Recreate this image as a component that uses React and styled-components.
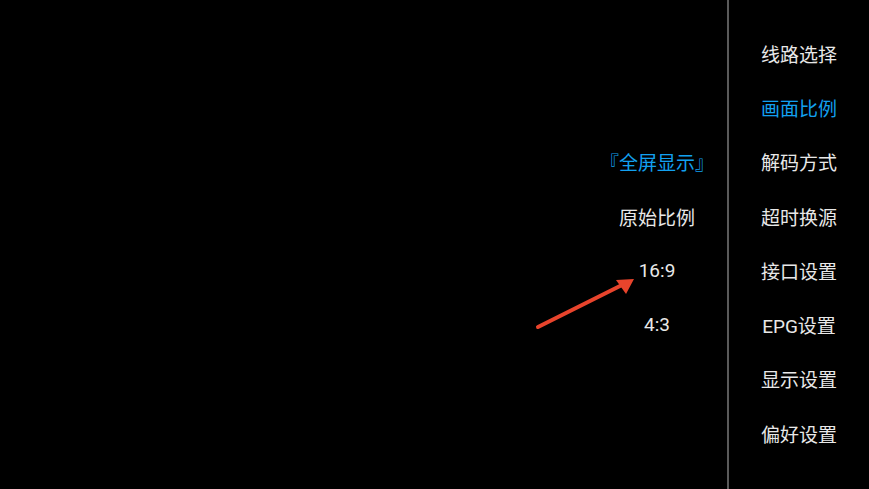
import styled, { createGlobalStyle } from "styled-components";

const GlobalStyle = createGlobalStyle`
  html, body {
    margin: 0;
    padding: 0;
    background: #000;
  }
  body {
    font-family: Roboto, "Noto Sans CJK SC", sans-serif;
  }
`;

const ROW = 54.3;
const TOP = 26;

const Screen = styled.div`
  position: relative;
  width: 869px;
  height: 489px;
  background: #000;
  display: flex;
  overflow: hidden;
`;

const Stage = styled.div`
  flex: 1;
`;

const Column = styled.ul`
  list-style: none;
  margin: 0;
  padding: ${({ $offset }) => TOP + $offset * ROW}px 0 0;
  width: ${({ $width }) => $width}px;
  display: flex;
  flex-direction: column;
`;

const Panel = styled.div`
  width: 140px;
  border-left: 2px solid #5a5a5a;
  height: 100%;
`;

const Item = styled.li`
  height: ${ROW}px;
  display: flex;
  align-items: center;
  justify-content: center;
  font-size: 19px;
  color: ${({ $active }) => ($active ? "#12a0f0" : "#e8e8e8")};
  white-space: nowrap;
`;

const Arrow = styled.svg`
  position: absolute;
  left: 530px;
  top: 270px;
  pointer-events: none;
`;

const menu = [
  "线路选择",
  "画面比例",
  "解码方式",
  "超时换源",
  "接口设置",
  "EPG设置",
  "显示设置",
  "偏好设置",
];

const ratios = ["『全屏显示』", "原始比例", "16:9", "4:3"];

export default function App() {
  return (
    <Screen>
      <GlobalStyle />
      <Stage />
      <Column $width={140} $offset={2}>
        {ratios.map((r, i) => (
          <Item key={r} $active={i === 0}>
            {r}
          </Item>
        ))}
      </Column>
      <Panel>
        <Column $width={140} $offset={0}>
          {menu.map((m) => (
            <Item key={m} $active={m === "画面比例"}>
              {m}
            </Item>
          ))}
        </Column>
      </Panel>
      <Arrow width="110" height="70" viewBox="0 0 110 70">
        <line
          x1="8"
          y1="57"
          x2="92"
          y2="15"
          stroke="#e8442c"
          strokeWidth="4"
          strokeLinecap="round"
        />
        <polygon points="104,9 86,10 96,24" fill="#e8442c" />
      </Arrow>
    </Screen>
  );
}
